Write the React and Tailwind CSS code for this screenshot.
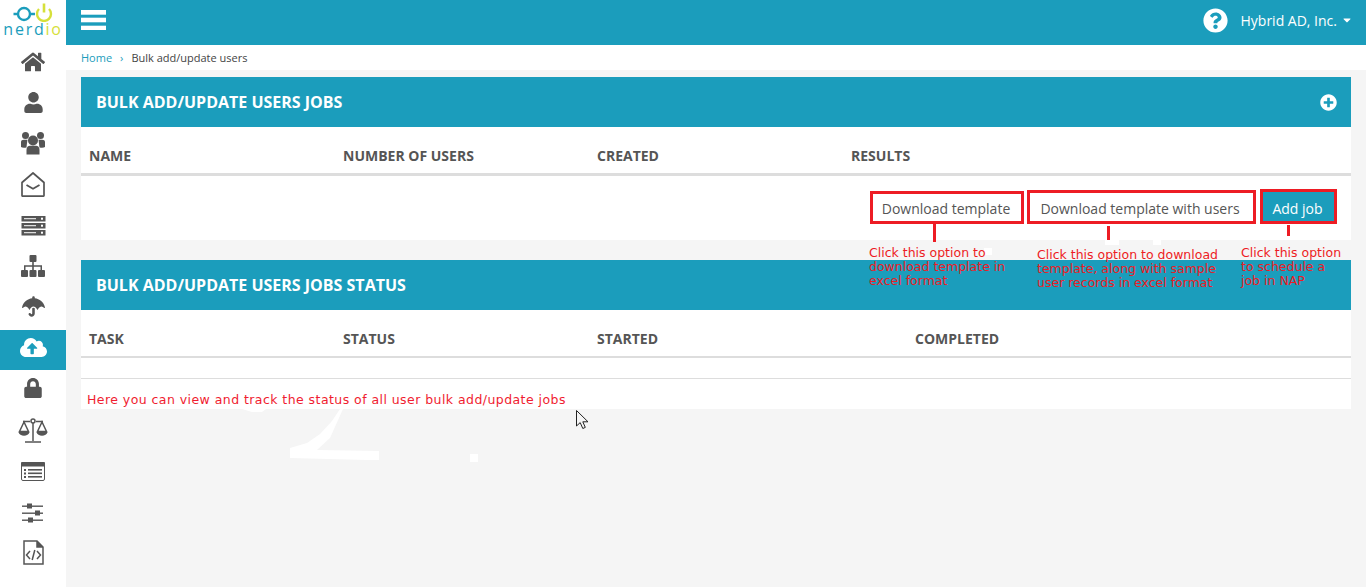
import React from "react";
import { FaHome, FaUser, FaUmbrella, FaCloudUploadAlt, FaLock, FaQuestionCircle, FaPlusCircle, FaCaretDown } from "react-icons/fa";

const Bars = () => (
  <svg width="25" height="20" viewBox="0 0 25 20" fill="#fff" className="-mt-[5px]">
    <rect width="25" height="4.7" />
    <rect y="7.7" width="25" height="4.6" />
    <rect y="15.7" width="25" height="4.3" />
  </svg>
);
const Users = () => (
  <svg width="24" height="23" viewBox="0 0 24 23" fill="#555">
    <circle cx="4.5" cy="3.5" r="3.5" />
    <circle cx="19.5" cy="3.5" r="3.5" />
    <path d="M0 15V10C0 8.5 1.2 7.8 3 7.8H6.5C6.2 10 6 11 5.5 15.5C3 16 1 15.8 0 15Z" />
    <path d="M24 15V10C24 8.5 22.8 7.8 21 7.8H17.5C17.8 10 18 11 18.5 15.5C21 16 23 15.8 24 15Z" />
    <circle cx="12" cy="8.5" r="5" />
    <path d="M5.5 22.5V18C5.5 15 7 13.8 9 13.8H15C17 13.8 18.5 15 18.5 18V22.5Z" />
  </svg>
);
const EnvelopeOpen = () => (
  <svg width="24" height="25" viewBox="0 0 24 25" fill="none" stroke="#555" strokeWidth="1.7" strokeLinejoin="round">
    <path d="M1 10.5L12 1L23 10.5V23.5C23 24 22.7 24.2 22 24.2H2C1.3 24.2 1 24 1 23.5Z" />
    <path d="M5.5 13L12 16.8L18.5 13" strokeWidth="1.8" />
  </svg>
);
const Servers = () => (
  <svg width="25" height="20" viewBox="0 0 25 20">
    {[0, 7, 14].map((y) => (
      <g key={y}>
        <rect x="0.5" y={y} width="24" height="5.5" fill="#555" />
        <rect x="3" y={y + 2.2} width="12" height="1" fill="#fff" />
        <rect x="20" y={y + 1.7} width="2" height="2" fill="#fff" />
      </g>
    ))}
  </svg>
);
const Sitemap = () => (
  <svg width="24" height="22" viewBox="0 0 24 22" fill="#555" className="-mt-[2px]">
    <rect x="8.5" y="0" width="7" height="7" rx="1" />
    <rect x="0" y="15" width="7" height="7" rx="1" />
    <rect x="8.5" y="15" width="7" height="7" rx="1" />
    <rect x="17" y="15" width="7" height="7" rx="1" />
    <path d="M11.2 7H12.8V10.3H21V15H19.5V11.8H12.8V15H11.2V11.8H4.5V15H3V10.3H11.2Z" />
  </svg>
);
const Scale = () => (
  <svg width="30" height="25" viewBox="0 0 30 25" fill="none" stroke="#555" strokeWidth="1.5">
    <path d="M15 4V23M7 24H23M5 3.5H12M18 3.5H25" />
    <circle cx="15" cy="3" r="2" fill="#fff" />
    <path d="M6 4L1.5 13.5H10.5ZM24 4L19.5 13.5H28.5Z" />
    <path d="M0.5 14C1.5 19 10.5 19 11.5 14ZM18.5 14C19.5 19 28.5 19 29.5 14Z" fill="#555" stroke="none" />
  </svg>
);
const ListBox = () => (
  <svg width="24" height="20" viewBox="0 0 24 20">
    <rect x="0.5" y="0.5" width="23" height="18" rx="1.5" fill="#fff" stroke="#555" />
    <rect x="0" y="0" width="24" height="4.5" rx="1" fill="#555" />
    {[7, 10.5, 14].map((y) => (
      <g key={y} fill="#555">
        <rect x="3" y={y} width="2" height="2" />
        <rect x="7" y={y} width="14" height="1.6" />
      </g>
    ))}
  </svg>
);
const Sliders = () => (
  <svg width="22" height="20" viewBox="0 0 22 20" fill="#555">
    <rect x="0" y="2.5" width="21" height="1.4" />
    <rect x="0" y="9.5" width="21" height="1.4" />
    <rect x="0" y="16.5" width="21" height="1.4" />
    <rect x="5" y="0.5" width="5" height="5" />
    <rect x="13" y="7.5" width="5" height="5" />
    <rect x="6" y="14.5" width="5" height="5" />
  </svg>
);
const CodeFile = () => (
  <svg width="21" height="25" viewBox="0 0 21 25" fill="none" stroke="#555" strokeWidth="1.5" className="-mt-[3px]">
    <path d="M1 1H14L20 7V24H1Z" />
    <path d="M14 1V7H20" fill="#555" />
    <path d="M7 11L3.5 15L7 19M14 11L17.5 15L14 19M11.8 10L9.2 20" />
  </svg>
);
const Logo = () => (
  <svg width="40" height="19" viewBox="0 0 40 19" fill="none" strokeWidth="2.4">
    <circle cx="11" cy="11" r="6" stroke="#1b9dbc" />
    <path d="M0.5 11H4.5M17 11H22" stroke="#1b9dbc" />
    <path d="M26 6A7 7 0 1 0 36 6" stroke="#d6e03a" />
    <path d="M31 0.5V9.500" stroke="#d6e03a" strokeWidth="2.6" />
  </svg>
);

const nav = [
  <FaHome size={24} />,
  <FaUser size={21} />,
  <Users />,
  <EnvelopeOpen />,
  <Servers />,
  <Sitemap />,
  <FaUmbrella size={23} className="-mt-[2px]" />,
  <FaCloudUploadAlt size={27} className="-mt-[2px]" />,
  <FaLock size={20} className="-mt-[3px]" />,
  <Scale />,
  <ListBox />,
  <Sliders />,
  <CodeFile />,
];

const PanelHead = ({ children, plus }) => (
  <div className="h-[50px] bg-[#1b9dbc] flex items-center justify-between pl-[15px] pr-[14px] text-white text-[16px] font-bold">
    <span>{children}</span>
    {plus && <FaPlusCircle size={17} />}
  </div>
);

const Note = ({ className, children }) => (
  <div className={`absolute text-[#ed1c24] text-[12.5px] leading-[14px] whitespace-pre font-['DejaVu_Sans',sans-serif] ${className}`}>{children}</div>
);

export default function App() {
  return (
    <div className="relative flex h-[587px] overflow-hidden bg-[#f5f5f5] font-['Open_Sans',sans-serif]">
      <aside className="w-[66px] shrink-0 bg-white">
        <div className="h-[43px] flex flex-col items-center pt-[3px]">
          <Logo />
          <div className="text-[16px] leading-[11px] tracking-[1.75px] text-[#1b9dbc] mt-[2px]">
            nerd<span className="text-[#d6e03a]">io</span>
          </div>
        </div>
        <nav className="flex flex-col gap-px">
          {nav.map((icon, i) => (
            <div
              key={i}
              className={`h-[40px] flex items-center justify-center pb-[3px] ${i === 7 ? "bg-[#1b9dbc] text-white" : "text-[#555]"}`}
            >
              {icon}
            </div>
          ))}
        </nav>
      </aside>

      <main className="flex-1 min-w-0">
        <header className="h-[45px] bg-[#1b9dbc] flex items-center justify-between pl-[15px] pr-[13px] text-white">
          <Bars />
          <div className="flex items-center -mt-[5px]">
            <FaQuestionCircle size={25} />
            <span className="ml-[12px] text-[14px]">Hybrid AD, Inc.</span>
            <FaCaretDown size={12} className="ml-[4px]" />
          </div>
        </header>
        <div className="h-[25px] bg-white flex items-center pl-[15px] pt-[2px] text-[11px] text-[#444]">
          <span className="text-[#1b9dbc]">Home</span>
          <span className="mx-[8px] text-[#1b9dbc]">›</span>
          <span>Bulk add/update users</span>
        </div>

        <div className="px-[15px] pt-[7px]">
          <section className="bg-white">
            <PanelHead plus>BULK ADD/UPDATE USERS JOBS</PanelHead>
            <div className="grid grid-cols-[254px_254px_254px_1fr] h-[49px] pt-[10px] items-center text-[14px] font-bold text-[#555] border-b-[3px] border-[#ddd]">
              {["NAME", "NUMBER OF USERS", "CREATED", "RESULTS"].map((l) => (
                <div key={l} className="pl-2">{l}</div>
              ))}
            </div>
            <div className="h-[64px] flex justify-end items-start pr-[14px] pt-[13px] text-[14px]">
              <button className="mt-[2px] h-[33px] w-[154px] pt-[2px] pr-[2px] border-[3px] border-[#ed1c24] text-[#555] bg-white">Download template</button>
              <button className="ml-[3px] mt-[1px] h-[34px] w-[229px] pt-[3px] pr-[3px] border-[3px] border-[#ed1c24] text-[#555] bg-white">Download template with users</button>
              <button className="ml-[4px] h-[35px] w-[77px] pt-[4px] pr-[2px] border-[3px] border-[#ed1c24] text-white bg-[#1b9dbc]">Add job</button>
            </div>
          </section>

          <section className="bg-white mt-[20px]">
            <PanelHead>BULK ADD/UPDATE USERS JOBS STATUS</PanelHead>
            <div className="grid grid-cols-[254px_254px_318px_1fr] h-[48px] pt-[10px] items-center text-[14px] font-bold text-[#555] border-b-2 border-[#ddd]">
              {["TASK", "STATUS", "STARTED", "COMPLETED"].map((l) => (
                <div key={l} className="pl-2">{l}</div>
              ))}
            </div>
            <div className="h-[21px] border-b border-[#ddd]" />
            <div className="h-[30px]" />
          </section>
        </div>
      </main>

      {/* Red annotations drawn over the page */}
      <div className="absolute left-[933px] top-[224px] w-[3px] h-[18px] bg-[#ed1c24]" />
      <div className="absolute left-[1107px] top-[226px] w-[3px] h-[15px] bg-[#ed1c24]" />
      <div className="absolute left-[1287px] top-[225px] w-[3px] h-[11px] bg-[#ed1c24]" />
      <div className="absolute left-[1105px] top-[240px] w-[14px] h-[5px] bg-white" />
      <div className="absolute left-[1153px] top-[240px] w-[8px] h-[5px] bg-white" />
      <div className="absolute left-[984px] top-[248px] w-[8px] h-[7px] bg-white" />
      <Note className="left-[869px] top-[246px]">{"Click this option to\ndownload template in\nexcel format"}</Note>
      <Note className="left-[1037px] top-[248px]">{"Click this option to download\ntemplate, along with sample\nuser records in excel format"}</Note>
      <Note className="left-[1241px] top-[246px]">{"Click this option\nto schedule a\njob in NAP"}</Note>
      <Note className="left-[87px] top-[393px] tracking-[0.44px] text-[#f01c30]">Here you can view and track the status of all user bulk add/update jobs</Note>

      <svg className="absolute left-[230px] top-[405px]" width="260" height="65" viewBox="230 405 260 65" fill="#fff">
        <path d="M242 409H266L262 412H252Z" />
        <path d="M340 409L332 421L320 434L307 443L290 448V458L367 460H379V451L317 450L330 438L343 409Z" />
        <rect x="470" y="454" width="8" height="8" />
      </svg>
      <svg className="absolute left-[576px] top-[410px]" width="13" height="20" viewBox="0 0 13 20">
        <path d="M0.5 0.5V16L4.2 12.6L6.8 18.5L9.3 17.4L6.8 11.8H12Z" fill="#f5f5f5" stroke="#222" strokeWidth="1" />
      </svg>
    </div>
  );
}
